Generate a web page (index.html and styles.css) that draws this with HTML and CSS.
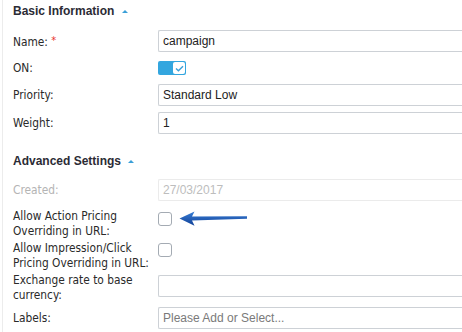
FILE: index.html
```html
<!DOCTYPE html>
<html lang="en">
<head>
  <meta charset="UTF-8">
  <title>Campaign Settings</title>
  <link rel="stylesheet" href="styles.css">
</head>
<body>
  <div class="panel">
    <div class="section-title first">Basic Information <span class="caret"></span></div>

    <div class="row">
      <div class="label">Name: <span class="req">*</span></div>
      <div class="field"><div class="input">campaign</div></div>
    </div>

    <div class="row row-toggle">
      <div class="label">ON:</div>
      <div class="field">
        <div class="toggle">
          <span class="toggle-knob">
            <svg width="9" height="7" viewBox="0 0 9 7"><path d="M1 3.6 L3.4 5.8 L8 1.2" fill="none" stroke="#3a9fd8" stroke-width="1.4"/></svg>
          </span>
        </div>
      </div>
    </div>

    <div class="row">
      <div class="label">Priority:</div>
      <div class="field"><div class="input">Standard Low</div></div>
    </div>

    <div class="row">
      <div class="label">Weight:</div>
      <div class="field"><div class="input">1</div></div>
    </div>

    <div class="section-title second">Advanced Settings <span class="caret"></span></div>

    <div class="row row-created">
      <div class="label muted">Created:</div>
      <div class="field"><div class="input disabled">27/03/2017</div></div>
    </div>

    <div class="row row-multi">
      <div class="label">Allow Action Pricing<br>Overriding in URL:</div>
      <div class="field">
        <span class="checkbox"></span>
        <svg class="arrow" width="70" height="16" viewBox="0 0 70 16">
          <defs>
            <linearGradient id="shaft" x1="0" y1="0" x2="0" y2="1">
              <stop offset="0" stop-color="#3a7fd6"/>
              <stop offset="1" stop-color="#0f3f96"/>
            </linearGradient>
          </defs>
          <path d="M0.5 7.5 L15.5 0.5 L13 5.6 L68 5.2 L68 7.8 L13 9.6 L15.5 14.8 Z" fill="url(#shaft)"/>
        </svg>
      </div>
    </div>

    <div class="row row-multi">
      <div class="label">Allow Impression/Click<br>Pricing Overriding in URL:</div>
      <div class="field"><span class="checkbox"></span></div>
    </div>

    <div class="row row-multi">
      <div class="label">Exchange rate to base<br>currency:</div>
      <div class="field"><div class="input"></div></div>
    </div>

    <div class="row row-last">
      <div class="label">Labels:</div>
      <div class="field"><div class="input placeholder">Please Add or Select...</div></div>
    </div>
  </div>
</body>
</html>
```

FILE: styles.css
```css
body {
  margin: 0;
  padding: 0;
  background-color: #fff;
  overflow: hidden;
}

.panel {
  margin-left: 2px;
  padding-left: 10px;
  border-left: 1px solid #ececec;
  min-height: 332px;
}

.section-title {
  font-family: "Liberation Sans", Arial, sans-serif;
  font-size: 12px;
  font-weight: bold;
  line-height: 15px;
  color: #2b2b35;
}

.section-title.first {
  padding-top: 4px;
  margin-bottom: 11px;
}

.section-title.second {
  margin-top: 20px;
  margin-bottom: 10px;
}

.caret {
  display: inline-block;
  width: 0;
  height: 0;
  margin-left: 4px;
  vertical-align: 2px;
  border-left: 3px solid transparent;
  border-right: 3px solid transparent;
  border-bottom: 3px solid #3a9fd8;
}

.row {
  display: flex;
  align-items: center;
  min-height: 22px;
  margin-bottom: 6px;
}

.label {
  width: 145px;
  flex-shrink: 0;
  font-family: "DejaVu Sans Condensed", "DejaVu Sans", sans-serif;
  font-size: 11.8px;
  line-height: 15px;
  color: #2a2a2a;
}

.label.muted {
  color: #b4b4b4;
}

.req {
  color: #e8332e;
  font-size: 11px;
  vertical-align: 2px;
}

.field {
  flex: 1;
  display: flex;
  align-items: center;
}

.input {
  flex: 1;
  height: 20px;
  line-height: 20px;
  padding: 0 4px;
  border: 1px solid #cdd1d6;
  border-right: none;
  border-radius: 2px 0 0 2px;
  font-family: "Liberation Sans", Arial, sans-serif;
  font-size: 12px;
  color: #222;
}

.input.disabled {
  border-color: #ebebeb;
  color: #bdbdbd;
}

.input.placeholder {
  color: #7a7a7a;
}

.row-toggle {
  min-height: 20px;
}

.toggle {
  display: flex;
  justify-content: flex-end;
  width: 28px;
  height: 14px;
  border-radius: 2px;
  background-color: #33a6df;
}

.toggle-knob {
  display: flex;
  align-items: center;
  justify-content: center;
  width: 12px;
  height: 12px;
  margin: 1px;
  border-radius: 2px;
  background-color: #fff;
}

.row-created {
  margin-bottom: 8px;
}

.row-multi {
  align-items: flex-start;
  min-height: 30px;
  margin-bottom: 2px;
}

.row-multi .field {
  padding-top: 2px;
}

.checkbox {
  display: inline-block;
  width: 12px;
  height: 12px;
  border: 1px solid #a4abb3;
  border-radius: 3px;
  background-color: #fff;
}

.arrow {
  margin-left: 7px;
}

.row-multi:nth-last-child(2) {
  margin-bottom: 4px;
}
```
